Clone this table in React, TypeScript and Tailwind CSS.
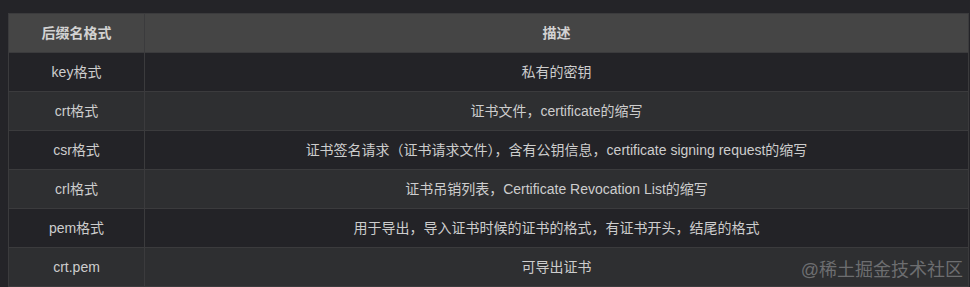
import React from "react";

interface Row {
  ext: string; // 后缀名
  desc: string; // 描述
}

const rows: Row[] = [
  { ext: "key格式", desc: "私有的密钥" },
  { ext: "crt格式", desc: "证书文件，certificate的缩写" },
  { ext: "csr格式", desc: "证书签名请求（证书请求文件），含有公钥信息，certificate signing request的缩写" },
  { ext: "crl格式", desc: "证书吊销列表，Certificate Revocation List的缩写" },
  { ext: "pem格式", desc: "用于导出，导入证书时候的证书的格式，有证书开头，结尾的格式" },
  { ext: "crt.pem", desc: "可导出证书" },
];

const App: React.FC = () => {
  return (
    <div
      className="relative w-[970px] h-[287px] overflow-hidden bg-[#242428] pt-[13px] pl-[8px] pr-[1px]"
      style={{ fontFamily: '"Liberation Sans", "Noto Sans CJK SC", sans-serif' }}
    >
      <table className="w-full border-collapse text-[14px] text-[#cdcdcd]">
        <thead>
          <tr className="bg-[#454545] h-[39px]">
            <th className="w-[136px] border border-[#3b3b3d] font-bold text-[#d2d2d2]">后缀名格式</th>
            <th className="border border-[#3b3b3d] font-bold text-[#d2d2d2]">描述</th>
          </tr>
        </thead>
        <tbody>
          {rows.map((row, i) => (
            <tr key={row.ext} className={i % 2 === 0 ? "bg-[#232327] h-[39px]" : "bg-[#2e2f31] h-[39px]"}>
              <td className="border border-[#3b3b3d] text-center">{row.ext}</td>
              <td className="border border-[#3b3b3d] text-center">{row.desc}</td>
            </tr>
          ))}
        </tbody>
      </table>
      {/* 水印 */}
      <div className="absolute right-[7px] bottom-[8px] text-[18px] leading-none text-[#7d7e80] opacity-80">
        @稀土掘金技术社区
      </div>
    </div>
  );
};

export default App;
